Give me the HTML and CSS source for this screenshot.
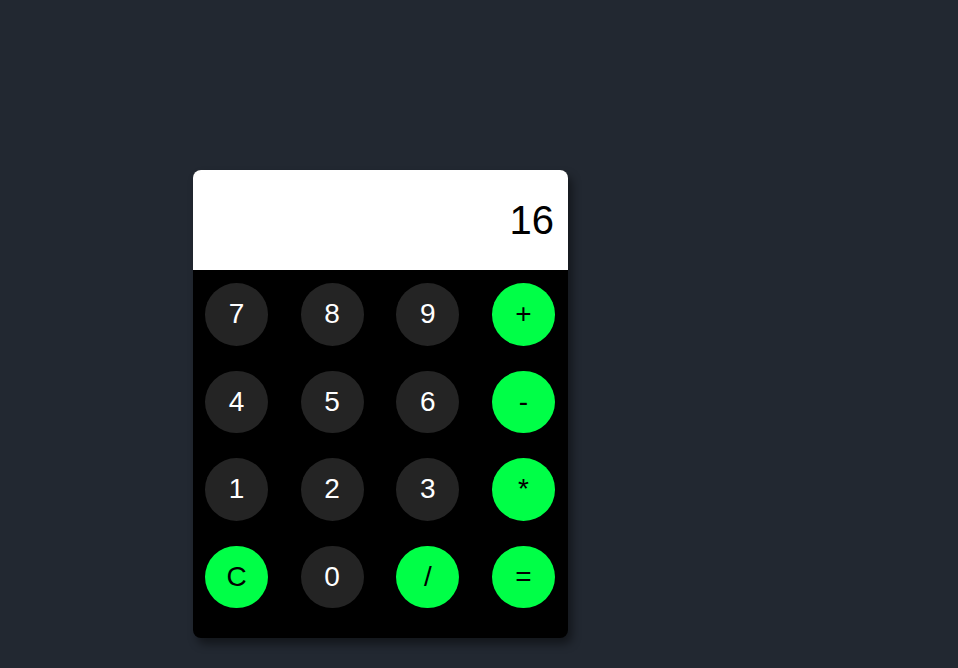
FILE: index.html
```html
<!DOCTYPE html>
<html>
<head>
<meta charset="utf-8">
<link rel="stylesheet" href="styles.css">
</head>
<body>
<div class="calc">
  <div class="display">16</div>
  <div class="keys">
    <button class="key">7</button>
    <button class="key">8</button>
    <button class="key">9</button>
    <button class="key op">+</button>
    <button class="key">4</button>
    <button class="key">5</button>
    <button class="key">6</button>
    <button class="key op">-</button>
    <button class="key">1</button>
    <button class="key">2</button>
    <button class="key">3</button>
    <button class="key op">*</button>
    <button class="key op">C</button>
    <button class="key">0</button>
    <button class="key op">/</button>
    <button class="key op">=</button>
  </div>
</div>
</body>
</html>
```

FILE: styles.css
```css
html, body {
  margin: 0;
  padding: 0;
  height: 100%;
}
body {
  background: #222831;
  font-family: "Liberation Sans", Arial, sans-serif;
  padding-top: 170px;
  padding-left: 193px;
  box-sizing: border-box;
}
.calc {
  width: 375px;
  background: #000;
  border-radius: 8px;
  overflow: hidden;
  box-shadow: 4px 6px 10px rgba(0, 0, 0, 0.45);
}
.display {
  height: 100px;
  background: #fff;
  color: #000;
  font-size: 40px;
  display: flex;
  align-items: center;
  justify-content: flex-end;
  padding-right: 14px;
}
.keys {
  display: grid;
  grid-template-columns: repeat(4, 63px);
  justify-content: space-between;
  row-gap: 25px;
  padding: 13px 13px 30px 12px;
}
.key {
  width: 63px;
  height: 62.5px;
  border-radius: 50%;
  border: none;
  background: #242424;
  color: #fff;
  font-family: "Liberation Sans", Arial, sans-serif;
  font-size: 28px;
  padding: 0;
  display: flex;
  align-items: center;
  justify-content: center;
}
.key.op {
  background: #00ff47;
  color: #000;
}
```
